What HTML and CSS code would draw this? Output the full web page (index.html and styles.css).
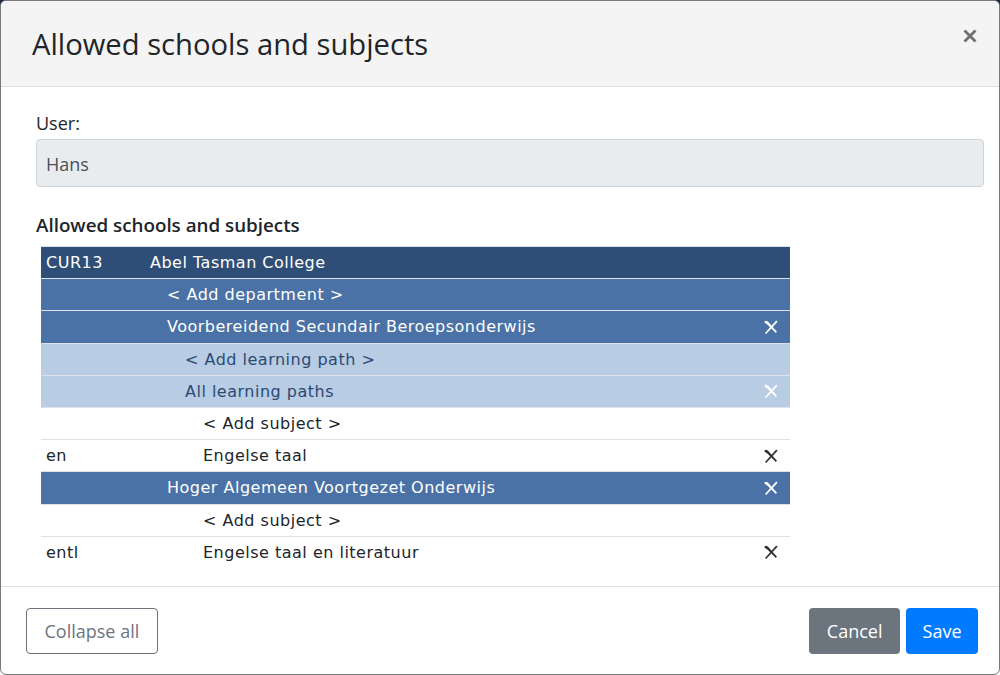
FILE: index.html
```html
<!DOCTYPE html>
<html>
<head>
<meta charset="utf-8">
<link rel="stylesheet" href="styles.css">
</head>
<body>
<div class="modal">
  <div class="modal-header">
    <h4 class="modal-title">Allowed schools and subjects</h4>
    <button class="close" aria-label="Close">
      <svg width="14" height="14" viewBox="0 0 14 14"><path d="M1.5 1.5 L12.5 12.5 M12.5 1.5 L1.5 12.5" stroke="#6f6f6f" stroke-width="2.8" stroke-linecap="butt"/></svg>
    </button>
  </div>
  <div class="modal-body">
    <label class="lbl">User:</label>
    <div class="input">Hans</div>
    <div class="section-title">Allowed schools and subjects</div>
    <table class="tree">
      <tr class="r-school"><td class="code">CUR13</td><td class="name l0">Abel Tasman College</td><td class="act"></td></tr>
      <tr class="r-dept"><td class="code"></td><td class="name l1">&lt; Add department &gt;</td><td class="act"></td></tr>
      <tr class="r-dept"><td class="code"></td><td class="name l1">Voorbereidend Secundair Beroepsonderwijs</td><td class="act"><svg class="x light" viewBox="0 0 16 16"><path d="M1.6 2.4 C3 0.8 4.6 2 5.6 3.2 L14 12.8 L12.8 14 L4.4 5.4 C3.4 4.6 0.8 4 1.6 2.4 Z"/><path d="M13.2 1.6 L14.6 2.8 L3.2 15 L2 13.9 Z"/></svg></td></tr>
      <tr class="r-path"><td class="code"></td><td class="name l2">&lt; Add learning path &gt;</td><td class="act"></td></tr>
      <tr class="r-path"><td class="code"></td><td class="name l2">All learning paths</td><td class="act"><svg class="x light" viewBox="0 0 16 16"><path d="M1.6 2.4 C3 0.8 4.6 2 5.6 3.2 L14 12.8 L12.8 14 L4.4 5.4 C3.4 4.6 0.8 4 1.6 2.4 Z"/><path d="M13.2 1.6 L14.6 2.8 L3.2 15 L2 13.9 Z"/></svg></td></tr>
      <tr class="r-subj"><td class="code"></td><td class="name l3">&lt; Add subject &gt;</td><td class="act"></td></tr>
      <tr class="r-subj"><td class="code">en</td><td class="name l3">Engelse taal</td><td class="act"><svg class="x dark" viewBox="0 0 16 16"><path d="M1.6 2.4 C3 0.8 4.6 2 5.6 3.2 L14 12.8 L12.8 14 L4.4 5.4 C3.4 4.6 0.8 4 1.6 2.4 Z"/><path d="M13.2 1.6 L14.6 2.8 L3.2 15 L2 13.9 Z"/></svg></td></tr>
      <tr class="r-dept"><td class="code"></td><td class="name l1">Hoger Algemeen Voortgezet Onderwijs</td><td class="act"><svg class="x light" viewBox="0 0 16 16"><path d="M1.6 2.4 C3 0.8 4.6 2 5.6 3.2 L14 12.8 L12.8 14 L4.4 5.4 C3.4 4.6 0.8 4 1.6 2.4 Z"/><path d="M13.2 1.6 L14.6 2.8 L3.2 15 L2 13.9 Z"/></svg></td></tr>
      <tr class="r-subj"><td class="code"></td><td class="name l3">&lt; Add subject &gt;</td><td class="act"></td></tr>
      <tr class="r-subj"><td class="code">entl</td><td class="name l3">Engelse taal en literatuur</td><td class="act"><svg class="x dark" viewBox="0 0 16 16"><path d="M1.6 2.4 C3 0.8 4.6 2 5.6 3.2 L14 12.8 L12.8 14 L4.4 5.4 C3.4 4.6 0.8 4 1.6 2.4 Z"/><path d="M13.2 1.6 L14.6 2.8 L3.2 15 L2 13.9 Z"/></svg></td></tr>
    </table>
  </div>
  <div class="modal-footer">
    <button class="btn btn-outline">Collapse all</button>
    <div class="spacer"></div>
    <button class="btn btn-secondary">Cancel</button>
    <button class="btn btn-primary">Save</button>
  </div>
</div>
</body>
</html>
```
FILE: styles.css
```css
html, body {
  margin: 0;
  padding: 0;
}
body {
  width: 1000px;
  height: 675px;
  background: linear-gradient(#1b2a3c 50%, #ffffff 50%);
  font-family: "Open Sans", "Noto Sans", sans-serif;
  color: #212529;
}
.modal {
  box-sizing: border-box;
  width: 1000px;
  height: 675px;
  background: #fff;
  border: 1px solid #7a7a7a;
  border-radius: 6px;
  overflow: hidden;
  display: flex;
  flex-direction: column;
}
.modal-header {
  box-sizing: border-box;
  height: 86px;
  flex: none;
  background: #f4f4f4;
  border-bottom: 1px solid #dee2e6;
  display: flex;
  align-items: center;
  justify-content: space-between;
  padding: 0 22px 0 31px;
}
.modal-title {
  margin: 0;
  font-size: 29.2px;
  font-weight: 500;
  line-height: 36px;
  color: #212529;
}
.close {
  border: none;
  background: none;
  padding: 0;
  width: 14px;
  height: 14px;
  display: flex;
  align-self: flex-start;
  margin-top: 28px;
}
.modal-body {
  flex: 1;
  padding: 24px 15px 0 35px;
}
.lbl {
  display: block;
  font-size: 18px;
  line-height: 24px;
  color: #212529;
  margin-bottom: 4px;
}
.input {
  box-sizing: border-box;
  height: 48px;
  background: #e9ecef;
  border: 1px solid #ced4da;
  border-radius: 4px;
  padding: 2px 9px 0;
  font-size: 18px;
  line-height: 44px;
  color: #495057;
}
.section-title {
  font-size: 18.8px;
  font-weight: 600;
  line-height: 24px;
  margin-top: 26px;
  margin-bottom: 9px;
}
.tree {
  margin-left: 5px;
  width: 749px;
  border-collapse: collapse;
  font-family: "DejaVu Sans", sans-serif;
  font-size: 16px;
  letter-spacing: 0.5px;
}
.tree td {
  height: 31.2px;
  padding: 0;
  border-top: 1px solid #dee2e6;
  vertical-align: middle;
  white-space: nowrap;
}
.tree .code {
  width: 104px;
  padding-left: 5px;
  box-sizing: border-box;
}
.tree .l0 { padding-left: 5px; }
.tree .l1 { padding-left: 22px; }
.tree .l2 { padding-left: 40px; }
.tree .l3 { padding-left: 58px; }
.tree .act {
  width: 36px;
  text-align: center;
}
.r-school { background: #2e4e78; color: #fff; }
.r-dept { background: #4a72a6; color: #fff; }
.r-path { background: #b8cce4; color: #2b4a73; }
.r-subj { background: #fff; color: #212529; }
.x {
  width: 16px;
  height: 16px;
  display: block;
  margin: 0 auto;
  position: relative;
  left: -1px;
}
.x.light { fill: #fff; }
.x.dark { fill: #333; }
.modal-footer {
  flex: none;
  box-sizing: border-box;
  height: 88px;
  border-top: 1px solid #dee2e6;
  display: flex;
  align-items: center;
  padding: 0 21px 0 25px;
  gap: 6px;
}
.spacer { flex: 1; }
.btn {
  box-sizing: border-box;
  height: 46px;
  padding: 0 17px;
  border-radius: 4px;
  font-family: "Open Sans", "Noto Sans", sans-serif;
  font-size: 18px;
  border: 1px solid transparent;
  margin-top: 1px;
}
.btn-outline {
  background: #fff;
  border-color: #6c757d;
  color: #6c757d;
  padding: 0 17.5px;
}
.btn-secondary {
  background: #6c757d;
  color: #fff;
  padding: 0 16.5px;
}
.btn-primary {
  background: #007bff;
  color: #fff;
  padding: 0 15.5px;
}
```
